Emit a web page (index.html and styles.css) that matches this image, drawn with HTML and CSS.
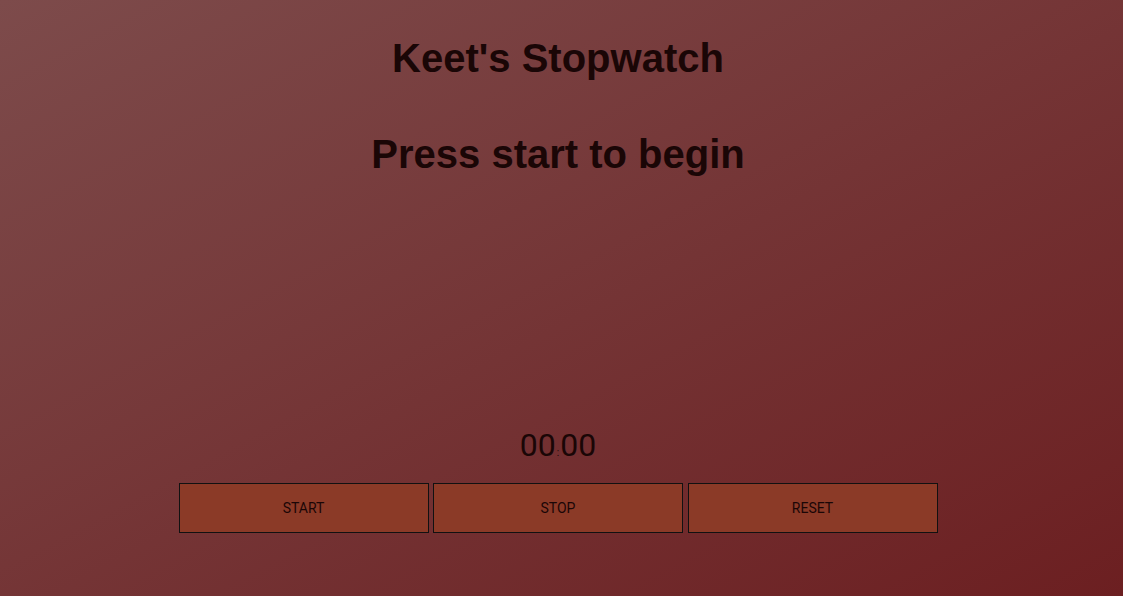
FILE: index.html
```html
<!DOCTYPE html>
<html>
<head>
<meta charset="utf-8">
<title>Keet's Stopwatch</title>
<link rel="stylesheet" href="styles.css">
</head>
<body>
<main class="page">
  <h1 class="title">Keet's Stopwatch</h1>
  <h1 class="subtitle">Press start to begin</h1>
  <div class="spacer"></div>
  <div class="watch">
    <div class="time"><span class="digits">00</span><span class="colon">:</span><span class="digits">00</span></div>
    <div class="buttons">
      <button class="btn">START</button>
      <button class="btn">STOP</button>
      <button class="btn">RESET</button>
    </div>
  </div>
</main>
</body>
</html>
```
FILE: styles.css
```css
html, body {
  margin: 0;
  height: 100%;
}
body {
  background: linear-gradient(to bottom right, #7d4b4b, #6c1f21);
  color: #1a0606;
  font-family: "Liberation Sans", Arial, sans-serif;
}
.page {
  height: 596px;
  display: flex;
  flex-direction: column;
  align-items: center;
  padding-right: 7px;
}
.title, .subtitle {
  margin: 0;
  font-size: 40px;
  font-weight: bold;
  line-height: 46px;
}
.title {
  margin-top: 35px;
}
.subtitle {
  margin-top: 50px;
}
.spacer {
  flex: 1;
}
.watch {
  width: 760px;
  margin-bottom: 63px;
  display: flex;
  flex-direction: column;
  align-items: center;
}
.time {
  font-family: Roboto, "Liberation Sans", sans-serif;
  font-size: 32px;
  line-height: 40px;
  margin-bottom: 10px;
}
.colon {
  font-size: 10px;
  margin: 0 1px;
}
.buttons {
  display: flex;
  gap: 4.5px;
}
.btn {
  width: 250px;
  height: 50px;
  background: #8b3a27;
  border: 1px solid #111;
  color: #1a0606;
  font-family: Roboto, "Liberation Sans", sans-serif;
  font-size: 14px;
  padding: 0;
  cursor: pointer;
}
```
